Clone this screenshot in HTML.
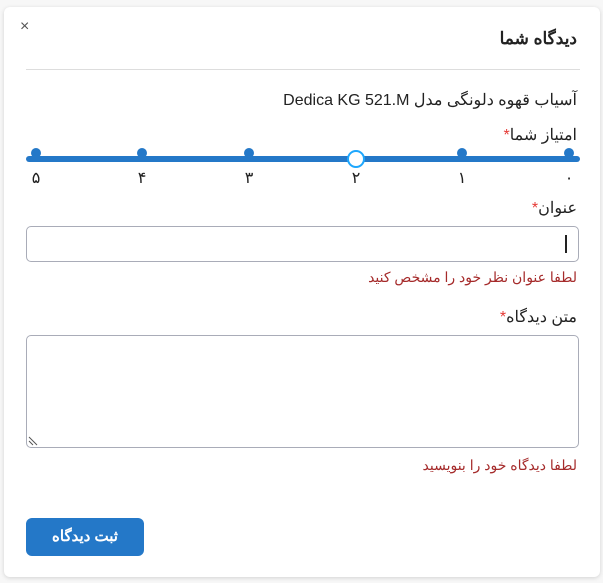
<!DOCTYPE html>
<html><head><meta charset="utf-8"><style>
html,body{margin:0;padding:0;background:#f7f7f7;width:603px;height:583px;overflow:hidden}
body{font-family:"Liberation Sans","Noto Sans CJK SC",sans-serif;color:#222}
.card{position:absolute;left:4px;top:7px;width:596px;height:570px;background:#fff;border-radius:6px;box-shadow:0 1px 4px rgba(0,0,0,.15)}
.t{position:absolute;right:23px;white-space:nowrap;direction:rtl}
.star{color:#e53935}
.err{color:#a52a2a;font-size:14px}
.box{position:absolute;left:22px;width:551px;border:1px solid #a9acb8;border-radius:5px;background:#fff}
.dot{position:absolute;width:10px;height:10px;border-radius:50%;background:#2478c8;top:141px}
.num{position:absolute;top:161px;font-size:16px;color:#222;width:20px;text-align:center}
</style></head><body>
<div class="card">
<div style="position:absolute;left:16px;top:11px;font-size:16px;color:#555">×</div>
<div class="t" style="top:22px;font-size:17px;font-weight:bold">دیدگاه شما</div>
<div style="position:absolute;left:22px;width:554px;top:62px;height:1px;background:#ddd"></div>
<div class="t" style="top:83px;font-size:16px">آسیاب قهوه دلونگی مدل Dedica KG 521.M</div>
<div class="t" style="top:118px;font-size:16px">امتیاز شما<span class="star">*</span></div>
<div style="position:absolute;left:22px;width:554px;top:149px;height:6px;background:#2478c8;border-radius:3px"></div>
<div class="dot" style="left:27px"></div>
<div class="dot" style="left:133px"></div>
<div class="dot" style="left:240px"></div>
<div class="dot" style="left:453px"></div>
<div class="dot" style="left:560px"></div>
<div style="position:absolute;left:343px;top:143px;width:14px;height:14px;border-radius:50%;background:#fff;border:2px solid #1ea7fd"></div>
<div class="num" style="left:22px">۵</div>
<div class="num" style="left:128px">۴</div>
<div class="num" style="left:235px">۳</div>
<div class="num" style="left:342px">۲</div>
<div class="num" style="left:448px">۱</div>
<div class="num" style="left:555px">۰</div>
<div class="t" style="top:191px;font-size:16px">عنوان<span class="star">*</span></div>
<div class="box" style="top:219px;height:34px"><div style="position:absolute;right:11px;top:8px;width:2px;height:18px;background:#222"></div></div>
<div class="t err" style="top:262px">لطفا عنوان نظر خود را مشخص کنید</div>
<div class="t" style="top:300px;font-size:16px">متن دیدگاه<span class="star">*</span></div>
<div class="box" style="top:328px;height:111px"><svg style="position:absolute;left:1px;bottom:1px" width="12" height="12"><path d="M1 3L9 11M1 7L5 11" stroke="#555" stroke-width="1"/></svg></div>
<div class="t err" style="top:450px">لطفا دیدگاه خود را بنویسید</div>
<div style="position:absolute;left:22px;top:511px;width:118px;height:38px;background:#2478c8;border-radius:6px;color:#fff;font-weight:bold;font-size:15px;text-align:center;line-height:38px;direction:rtl">ثبت دیدگاه</div>
</div>
</body></html>
